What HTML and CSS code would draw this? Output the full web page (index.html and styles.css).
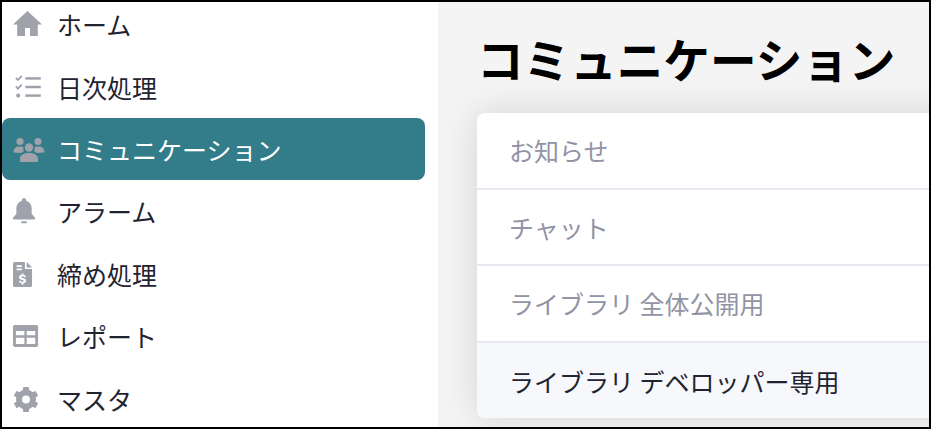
FILE: index.html
```html
<!DOCTYPE html>
<html lang="ja">
<head>
    <meta charset="UTF-8">
    <title>コミュニケーション</title>
    <link rel="stylesheet" href="styles.css">
</head>
<body>
<div class="frame">
    <!-- サイドメニュー -->
    <nav class="sidebar">
        <a class="nav-item">
            <svg class="nav-icon" viewBox="0 0 34 28"><path d="M15.500 1 1 14.500h4.200V26h7.800v-8h5v8h7.800V14.500H30z"/></svg>
            <span>ホーム</span>
        </a>
        <a class="nav-item">
            <svg class="nav-icon" viewBox="0 0 24 24" preserveAspectRatio="none"><g transform="translate(1 -0.600) scale(0.84 1.05)"><path class="thin" d="M2 4.500l1.800 1.800L7 3M2 11.500l1.800 1.800L7 10"/><circle cx="4" cy="19" r="1.700"/><rect x="10" y="4" width="13" height="2"/><rect x="10" y="11" width="13" height="2"/><rect x="10" y="18" width="13" height="2"/></g></svg>
            <span>日次処理</span>
        </a>
        <a class="nav-item active">
            <svg class="nav-icon" viewBox="0 0 34 28"><circle cx="8" cy="6.500" r="3.600"/><circle cx="26" cy="6.500" r="3.600"/><circle cx="17" cy="12.500" r="4.200"/><path d="M1.500 17.500c0-3.500 2-6 5-6h3c.8 0 1.500.2 2 .5-.5 1-.5 3 .5 4.500-1.500.5-2.500 1-3 1.500z"/><path d="M32.500 17.500c0-3.500-2-6-5-6h-3c-.8 0-1.500.2-2 .5.5 1 .5 3-.5 4.500 1.500.5 2.500 1 3 1.500z"/><path d="M8 27v-3c0-3.500 3-6 9-6s9 2.500 9 6v3z"/></svg>
            <span>コミュニケーション</span>
        </a>
        <a class="nav-item">
            <svg class="nav-icon" viewBox="0 0 34 28"><g transform="translate(-1.900 -0.150) scale(1.160)"><path d="M12 1c-1 0-1.700.7-1.700 1.700v.6C7 4.200 5.400 7 5.400 10v4.500L2.500 18v1.500h19V18l-2.900-3.500V10c0-3-1.600-5.800-4.900-6.700v-.6C13.700 1.700 13 1 12 1z"/><rect x="9.500" y="21" width="5" height="1.800" rx=".9"/></g></svg>
            <span>アラーム</span>
        </a>
        <a class="nav-item">
            <svg class="nav-icon" viewBox="0 0 34 28"><g transform="translate(-3.750 1.450) scale(1.190 1.090)"><path fill-rule="evenodd" d="M5.500 0.500h8.500v6.500h6v15a1.500 1.500 0 0 1-1.500 1.500h-13A1.500 1.500 0 0 1 4 22V2a1.500 1.500 0 0 1 1.500-1.500zM7 3.500v1.500h4.500V3.500zM7 6.500V8h4.500V6.500zM12.700 12.300v-1.300h-1.400v1.300c-1.300.2-2.300 1-2.300 2.300 0 1.400 1.200 2 2.700 2.400 1 .3 1.300.5 1.300 1s-.5.8-1.200.8c-.8 0-1.300-.4-1.400-1H9c.1 1.300 1 2.100 2.300 2.300V21.300h1.400v-1.200c1.300-.2 2.300-1 2.300-2.400 0-1.500-1.200-2.100-2.800-2.500-1-.3-1.200-.5-1.200-.9s.4-.7 1-.7c.7 0 1.100.3 1.200.9h1.600c-.1-1.200-.9-2-2.100-2.200z"/><path d="M15.500.5 20 5.500h-4.500z"/></g></svg>
            <span>締め処理</span>
        </a>
        <a class="nav-item">
            <svg class="nav-icon" viewBox="0 0 34 28"><g transform="translate(-0.140 -0.670) scale(1.140 1.220)"><path fill-rule="evenodd" d="M2.500 3h19A1.500 1.500 0 0 1 23 4.500v15a1.500 1.500 0 0 1-1.500 1.500h-19A1.500 1.500 0 0 1 1 19.500v-15A1.500 1.500 0 0 1 2.500 3zM3.500 8v3.500h7.500V8zM13 8v3.500h7.500V8zM3.500 13.500v5h7.500v-5zM13 13.500v5h7.500v-5z"/></g></svg>
            <span>レポート</span>
        </a>
        <a class="nav-item">
            <svg class="nav-icon" viewBox="0 0 34 28"><g transform="translate(2 2)"><circle class="gear-ring" cx="12" cy="12.500" r="7"/><rect x="9" y="0" width="6" height="5" rx="1"/><rect x="9" y="0" width="6" height="5" rx="1" transform="rotate(60 12 12.500)"/><rect x="9" y="0" width="6" height="5" rx="1" transform="rotate(120 12 12.500)"/><rect x="9" y="0" width="6" height="5" rx="1" transform="rotate(180 12 12.500)"/><rect x="9" y="0" width="6" height="5" rx="1" transform="rotate(240 12 12.500)"/><rect x="9" y="0" width="6" height="5" rx="1" transform="rotate(300 12 12.500)"/></g></svg>
            <span>マスタ</span>
        </a>
    </nav>

    <!-- メイン -->
    <main class="content">
        <h1 class="page-title">コミュニケーション</h1>
        <div class="card">
            <div class="card-row">お知らせ</div>
            <div class="card-row">チャット</div>
            <div class="card-row">ライブラリ 全体公開用</div>
            <div class="card-row current">ライブラリ デベロッパー専用</div>
        </div>
    </main>
</div>
</body>
</html>
```

FILE: styles.css
```css
* {
    box-sizing: border-box;
}

html, body {
    margin: 0;
    padding: 0;
}

body {
    font-family: "Noto Sans CJK JP", "Noto Sans", sans-serif;
    background-color: #fff;
}

.frame {
    display: flex;
    width: 931px;
    height: 429px;
    border: 2px solid #000;
    overflow: hidden;
}

.sidebar {
    flex: 0 0 436px;
    display: flex;
    flex-direction: column;
    padding: 0 13px 0 0;
    margin-top: -9px;
    background-color: #fff;
}

.nav-item {
    flex: 0 0 62.4px;
    display: flex;
    align-items: center;
    gap: 11px;
    padding-left: 10px;
    font-size: 25px;
    color: #1f2430;
    border-radius: 8px;
}

.nav-item.active {
    background-color: #337d8a;
    color: #fff;
}

.nav-icon {
    flex: 0 0 34px;
    width: 34px;
    height: 28px;
    fill: #9fa1ab;
}

.thin {
    fill: none;
    stroke: #9fa1ab;
    stroke-width: 1.500;
}

.gear-ring {
    fill: none;
    stroke: #9fa1ab;
    stroke-width: 6;
}

.content {
    flex: 1;
    min-width: 0;
    padding: 0 0 0 39px;
    background-color: #f4f4f5;
}

.page-title {
    margin: 0;
    height: 111px;
    padding-top: 27px;
    font-size: 46.6px;
    line-height: 58px;
    font-weight: 700;
    color: #000;
    white-space: nowrap;
}

.card {
    width: 600px;
    height: 305px;
    background-color: #fff;
    border-radius: 8px;
    box-shadow: 0 0 36px rgba(0, 0, 0, 0.13);
    overflow: hidden;
}

.card-row {
    display: flex;
    align-items: center;
    height: 76.500px;
    padding-left: 32px;
    font-size: 25px;
    color: #9294a5;
    border-bottom: 2px solid #e8e8f3;
}

.card-row.current {
    background-color: #f7f8fc;
    color: #1f2430;
    border-bottom: none;
}
```
